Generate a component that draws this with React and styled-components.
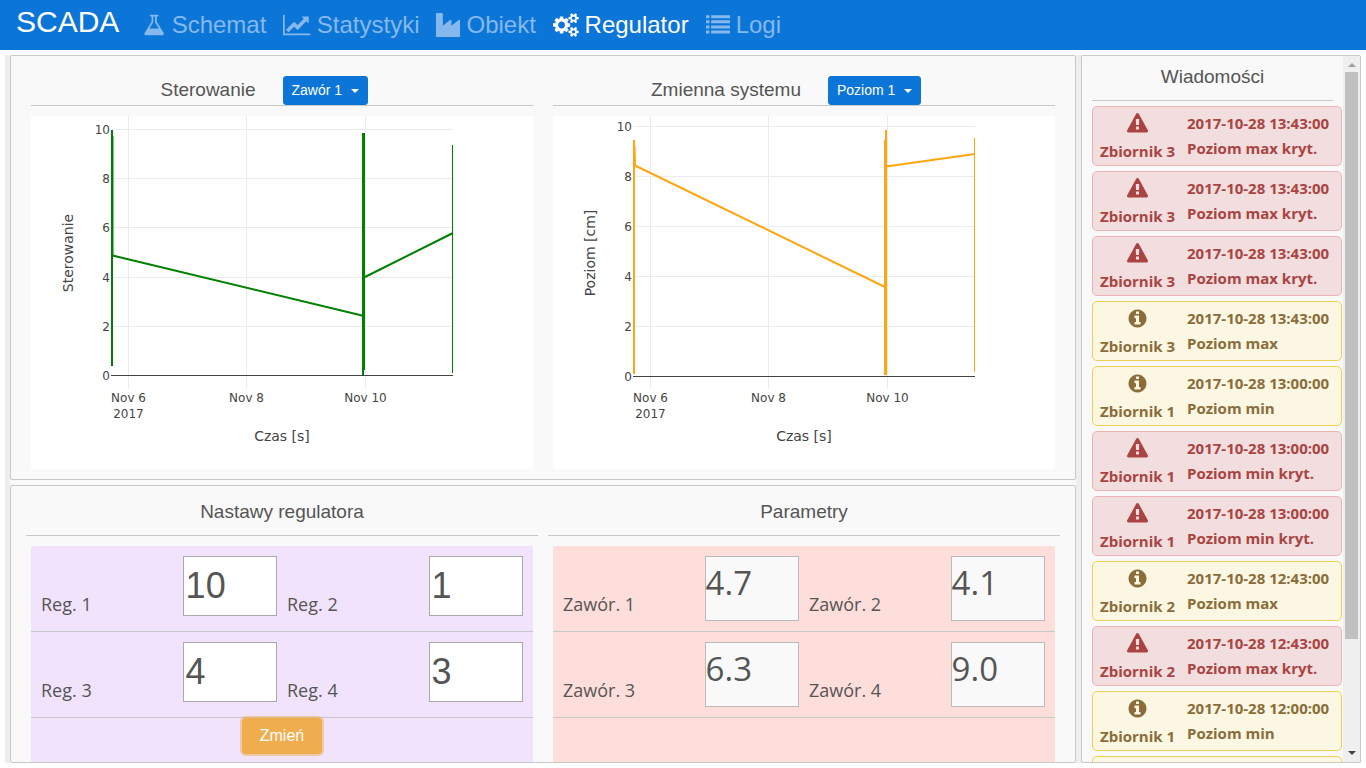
import React, { useState } from 'react';
import styled, { createGlobalStyle, css } from 'styled-components';

const line = '#c8c8c8';
const ink = '#555';
const uiFont = "'Liberation Sans', Arial, sans-serif";
const bodyFont = "'Open Sans', 'Noto Sans', sans-serif";

const GlobalStyle = createGlobalStyle`
  * { box-sizing: border-box; }
  body { margin: 0; background: #fff; color: ${ink}; font-family: ${bodyFont}; }
`;

const Page = styled.div`
  display: flex;
  flex-direction: column;
  height: 100vh;
  overflow: hidden;
`;

/* Navigation */

const Navbar = styled.header`
  display: flex;
  align-items: center;
  gap: 24px;
  flex: none;
  height: 50px;
  padding: 0 16px;
  background: #0c75d8;
  font-family: ${uiFont};
`;

const Brand = styled.a`
  padding-bottom: 6px;
  color: #fff;
  font-size: 30px;
  line-height: 36px;
  text-decoration: none;
`;

const NavList = styled.nav`
  display: flex;
  gap: 17px;
`;

const NavLink = styled.a`
  display: flex;
  align-items: center;
  gap: 6px;
  color: ${(p) => (p.$active ? '#fff' : '#85b9eb')};
  font-size: 24px;
  line-height: 28px;
  text-decoration: none;
`;

const Glyph = styled.svg`
  display: block;
  flex: none;
  height: ${(p) => p.$size}px;
  fill: currentColor;
`;

const icons = {
  flask: [1664, 'M1527 1447q56 89 21.5 153t-140.5 64h-1152q-106 0-140.5-64t21.5-153l503-793v-399h-64q-26 0-45-19t-19-45 19-45 45-19h512q26 0 45 19t19 45-19 45-45 19h-64v399zm-779-725l-272 430h712l-272-430-20-31v-436h-128v436z'],
  chart: [2048, 'M2048 1536v128h-2048v-1536h128v1408h1920zm-128-1248v435q0 21-19.5 29.5t-35.5-7.5l-121-121-633 633q-10 10-23 10t-23-10l-233-233-416 416-192-192 585-585q10-10 23-10t23 10l233 233 464-464-121-121q-16-16-7.5-35.5t29.5-19.5h435q14 0 23 9t9 23z'],
  industry: [1792, 'M448 0q26 0 45 19t19 45v891l536-429q17-14 40-14 26 0 45 19t19 45v379l536-429q17-14 40-14 26 0 45 19t19 45v1152q0 26-19 45t-45 19h-1664q-26 0-45-19t-19-45v-1664q0-26 19-45t45-19h384z'],
  cogs: [1920, 'M896 896q0-106-75-181t-181-75-181 75-75 181 75 181 181 75 181-75 75-181zm768 512q0-52-38-90t-90-38-90 38-38 90q0 53 37.5 90.5t90.5 37.5 90.5-37.5 37.5-90.5zm0-1024q0-52-38-90t-90-38-90 38-38 90q0 53 37.5 90.5t90.5 37.5 90.5-37.5 37.5-90.5zm-384 421v185q0 10-7 19.5t-16 10.5l-155 24q-11 35-32 76 34 48 90 115 7 11 7 20 0 12-7 19-23 30-82.5 89.5t-78.5 59.5q-11 0-21-7l-115-90q-37 19-77 31-11 108-23 155-7 24-30 24h-186q-11 0-20-7.5t-10-17.5l-23-153q-34-10-75-31l-118 89q-7 7-20 7-11 0-21-8-144-133-144-160 0-9 7-19 10-14 41-53t47-61q-23-44-35-82l-152-24q-10-1-17-9.5t-7-19.5v-185q0-10 7-19.5t16-10.5l155-24q11-35 32-76-34-48-90-115-7-11-7-20 0-12 7-20 22-30 82-89t79-59q11 0 21 7l115 90q34-18 77-32 11-108 23-154 7-24 30-24h186q11 0 20 7.5t10 17.5l23 153q34 10 75 31l118-89q8-7 20-7 11 0 21 8 144 133 144 160 0 8-7 19-12 16-42 54t-45 60q23 48 34 82l152 23q10 2 17 10.5t7 19.5zm640 533v140q0 16-149 31-12 27-30 52 51 113 51 138 0 4-4 7-122 71-124 71-8 0-46-47t-52-68q-20 2-30 2t-30-2q-14 21-52 68t-46 47q-2 0-124-71-4-3-4-7 0-25 51-138-18-25-30-52-149-15-149-31v-140q0-16 149-31 13-29 30-52-51-113-51-138 0-4 4-7 4-2 35-20t59-34 30-16q8 0 46 46.5t52 67.5q20-2 30-2t30 2q51-71 92-112l6-2q4 0 124 70 4 3 4 7 0 25-51 138 17 23 30 52 149 15 149 31zm0-1024v140q0 16-149 31-12 27-30 52 51 113 51 138 0 4-4 7-122 71-124 71-8 0-46-47t-52-68q-20 2-30 2t-30-2q-14 21-52 68t-46 47q-2 0-124-71-4-3-4-7 0-25 51-138-18-25-30-52-149-15-149-31v-140q0-16 149-31 13-29 30-52-51-113-51-138 0-4 4-7 4-2 35-20t59-34 30-16q8 0 46 46.5t52 67.5q20-2 30-2t30 2q51-71 92-112l6-2q4 0 124 70 4 3 4 7 0 25-51 138 17 23 30 52 149 15 149 31z'],
  list: [1792, 'M0 1312h256v224h-256zM0 928h256v224h-256zM0 544h256v224h-256zM0 160h256v224h-256zM384 1312h1408v224h-1408zM384 928h1408v224h-1408zM384 544h1408v224h-1408zM384 160h1408v224h-1408z'],
  warning: [1792, 'M1024 1375v-190q0-14-9.5-23.5t-22.5-9.5h-192q-13 0-22.5 9.5t-9.5 23.5v190q0 14 9.5 23.5t22.5 9.5h192q13 0 22.5-9.5t9.5-23.5zm-2-374l18-459q0-12-10-19-13-11-24-11h-220q-11 0-24 11-10 7-10 21l17 457q0 10 10 16.5t24 6.5h185q14 0 23.5-6.5t10.5-16.5zm-14-934l768 1408q35 63-2 126-17 29-46.5 46t-63.5 17h-1536q-34 0-63.5-17t-46.5-46q-37-63-2-126l768-1408q17-31 47-49t65-18 65 18 47 49z'],
  info: [1792, 'M1152 1376v-160q0-14-9-23t-23-9h-96v-512q0-14-9-23t-23-9h-320q-14 0-23 9t-9 23v160q0 14 9 23t23 9h96v320h-96q-14 0-23 9t-9 23v160q0 14 9 23t23 9h448q14 0 23-9t9-23zm-128-896v-160q0-14-9-23t-23-9h-192q-14 0-23 9t-9 23v160q0 14 9 23t23 9h192q14 0 23-9t9-23zm640 416q0 209-103 385.5t-279.5 279.5-385.5 103-385.5-103-279.5-279.5-103-385.5 103-385.5 279.5-279.5 385.5-103 385.5 103 279.5 279.5 103 385.5z'],
};

function Icon({ name, size }) {
  const [width, d] = icons[name];
  return (
    <Glyph viewBox={`0 0 ${width} 1792`} $size={size} aria-hidden="true">
      <path d={d} />
    </Glyph>
  );
}

/* Page frame */

const Workspace = styled.div`
  display: flex;
  gap: 5px;
  flex: 1;
  min-height: 0;
  margin: 5px;
  padding-left: 5px;
  background: #eee;
`;

const MainColumn = styled.main`
  display: flex;
  flex-direction: column;
  gap: 5px;
  flex: 1;
  min-width: 0;
  background: #f9f9f9;
`;

const Panel = styled.section`
  display: flex;
  border: 1px solid ${line};
  border-radius: 2px;
  background: #f9f9f9;
  overflow: hidden;
`;

const ChartsPanel = styled(Panel)`
  flex: none;
  gap: 20px;
  padding: 20px 20px 10px;
`;

const SettingsPanel = styled(Panel)`
  flex: 1;
  min-height: 0;
  gap: 10px;
  padding: 0 15px;
`;

const Title = styled.h2`
  margin: 0;
  font-family: ${uiFont};
  font-size: 19px;
  font-weight: 400;
  line-height: 27px;
  text-align: center;
`;

/* Charts */

const ChartColumn = styled.div`
  flex: 1;
  min-width: 0;
`;

const ChartHeader = styled.div`
  display: flex;
  justify-content: center;
  gap: 27px;
  height: 30px;
  padding-right: 36px;
  margin-bottom: 10px;
  border-bottom: 1px solid ${line};
`;

const Picker = styled.div`
  display: flex;
  position: relative;
`;

const PickerSelect = styled.select`
  appearance: none;
  height: 29px;
  padding: 0 24px 2px 8px;
  border: 1px solid #0c75d8;
  border-radius: 3px;
  background: #0c75d8;
  color: #fff;
  font-family: ${uiFont};
  font-size: 14px;
`;

const Caret = styled.span`
  position: absolute;
  right: 9px;
  top: 13px;
  border: 4px solid transparent;
  border-top-color: #fff;
  border-bottom: 0;
  pointer-events: none;
`;

const Plot = styled.svg`
  display: block;
  width: 100%;
  height: 353px;
  background: #fff;
  fill: #444;
  font-family: 'DejaVu Sans', Verdana, sans-serif;
  font-size: 12px;
`;

const AxisTitle = styled.text`
  font-size: 14px;
  text-anchor: middle;
`;

const dates = [
  [97.5, 'Nov 6'],
  [215.5, 'Nov 8'],
  [334.5, 'Nov 10'],
];

function Chart({ yTitle, rows, color, strokes }) {
  const base = rows[rows.length - 1];
  return (
    <Plot viewBox="0 0 502 353" role="img" aria-label={yTitle}>
      <g stroke="#ebebeb">
        {rows.map((y) => <line key={y} x1="81" x2="422" y1={y} y2={y} />)}
        {dates.map(([x]) => <line key={x} x1={x} x2={x} y1="0" y2="273" />)}
      </g>
      <line x1="80" x2="422" y1={base} y2={base} stroke="#444" />
      <g fill="none" stroke={color}>
        {strokes.map(([width, d]) => <path key={d} d={d} strokeWidth={width} />)}
      </g>
      <g textAnchor="end">
        {rows.map((y, i) => <text key={y} x="79" y={y + 4.5}>{10 - 2 * i}</text>)}
      </g>
      <g textAnchor="middle">
        {dates.map(([x, label]) => <text key={label} x={x} y="286">{label}</text>)}
        <text x="97.5" y="302">2017</text>
      </g>
      <AxisTitle x="251" y="325">Czas [s]</AxisTitle>
      <AxisTitle transform="translate(42 137) rotate(-90)">{yTitle}</AxisTitle>
    </Plot>
  );
}

function ChartBlock({ title, options, ...chart }) {
  return (
    <ChartColumn>
      <ChartHeader>
        <Title>{title}</Title>
        <Picker>
          <PickerSelect aria-label={title}>
            {options.map((o) => <option key={o}>{o}</option>)}
          </PickerSelect>
          <Caret />
        </Picker>
      </ChartHeader>
      <Chart {...chart} />
    </ChartColumn>
  );
}

/* Settings */

const SettingsColumn = styled.div`
  display: flex;
  flex-direction: column;
  flex: 1;
  min-width: 0;
`;

const SettingsTitle = styled(Title)`
  flex: none;
  padding: 12px 0 10px;
  margin-bottom: 10px;
  border-bottom: 1px solid ${line};
`;

const FieldBox = styled.form`
  flex: 1;
  min-height: 0;
  margin: 0 5px;
  border-radius: 2px 2px 0 0;
  background: ${(p) => p.$tint};
  text-align: center;
`;

const FieldRow = styled.div`
  display: flex;
  gap: 10px;
  padding: 10px;
  border-bottom: 1px solid ${line};
  text-align: left;
`;

const Field = styled.div`
  display: flex;
  justify-content: space-between;
  flex: 1;
  min-width: 0;
  height: 65px;
`;

const FieldLabel = styled.label`
  align-self: flex-end;
  padding-bottom: 5px;
  font-size: 18px;
  line-height: 24px;
`;

const cell = css`
  width: 40%;
  color: ${ink};
`;

const NumberInput = styled.input`
  ${cell}
  height: 60px;
  padding: 0 2px;
  border: 1px solid #aaa;
  background: #fff;
  font-family: ${uiFont};
  font-size: 36px;
`;

const Reading = styled.output`
  ${cell}
  border: 1px solid #bbb;
  background: #f9f9f9;
  font-size: 33px;
  line-height: 52px;
`;

const SubmitButton = styled.button`
  width: 80px;
  height: 36px;
  border: 0;
  border-radius: 4px;
  background: #f0ad4e;
  box-shadow: 0 0 0 2px rgba(240, 173, 78, 0.5);
  color: #fff;
  font-family: ${uiFont};
  font-size: 16px;
`;

/* Messages */

const Sidebar = styled(Panel)`
  flex: none;
  width: 280px;
`;

const Feed = styled.div`
  flex: 1;
  min-width: 0;
  padding: 0 1px 0 10px;
`;

const FeedTitle = styled(Title)`
  padding: 7px 0 10px;
  margin: 0 9px 5px 0;
  border-bottom: 1px solid ${line};
`;

const FeedList = styled.ul`
  display: flex;
  flex-direction: column;
  gap: 5px;
  margin: 0;
  padding: 0;
  list-style: none;
`;

const Message = styled.li`
  display: flex;
  gap: 5px;
  height: 60px;
  border: 1px solid ${(p) => (p.$critical ? '#ebb3b6' : '#eed052')};
  border-radius: 5px;
  background: ${(p) => (p.$critical ? '#f2dede' : '#fcf7e2')};
  color: ${(p) => (p.$critical ? '#a94442' : '#8a6d3b')};
  font-size: 15px;
  font-weight: 700;
  line-height: 25px;
  white-space: nowrap;
`;

const Source = styled.div`
  display: flex;
  flex-direction: column;
  align-items: center;
  gap: 5px;
  width: 89px;
  padding-top: 6px;
`;

const Details = styled.div`
  display: flex;
  flex-direction: column;
  padding-top: 4px;
`;

const ScrollTrack = styled.div`
  display: flex;
  flex-direction: column;
  align-items: center;
  justify-content: space-between;
  width: 17px;
  padding: 7px 0;
  background: #efefef;
`;

const ScrollThumb = styled.div`
  flex: 1;
  width: 13px;
  margin: 5px 0 112px;
  background: #c0c0c0;
`;

const ScrollArrow = styled.span`
  border: 4px solid transparent;
  ${(p) => (p.$up
    ? 'border-bottom-color: #a0a0a0; border-top: 0;'
    : 'border-top-color: #444; border-bottom: 0;')}
`;

const navItems = [
  ['flask', 'Schemat'],
  ['chart', 'Statystyki'],
  ['industry', 'Obiekt'],
  ['cogs', 'Regulator'],
  ['list', 'Logi'],
];

const controlStrokes = [
  [2, 'M81 14V250M81.5 20V140'],
  [2, 'M81.5 139.5L332 199.7M334 161L422 117'],
  [3, 'M332.5 17V254'],
  [2, 'M332 250V259M333 120V253'],
  [1, 'M421.5 29V257'],
];

const levelStrokes = [
  [2, 'M81 24V258M81.5 30L82 49'],
  [2, 'M82 49.5L332 171M333 50.5L422 38'],
  [3, 'M332.5 24V259'],
  [2, 'M333 14V30M333 26V258'],
  [1, 'M421.5 22V256'],
];

const messages = [
  ['13:43:00', 3, 'Poziom max kryt.'],
  ['13:43:00', 3, 'Poziom max kryt.'],
  ['13:43:00', 3, 'Poziom max kryt.'],
  ['13:43:00', 3, 'Poziom max'],
  ['13:00:00', 1, 'Poziom min'],
  ['13:00:00', 1, 'Poziom min kryt.'],
  ['13:00:00', 1, 'Poziom min kryt.'],
  ['12:43:00', 2, 'Poziom max'],
  ['12:43:00', 2, 'Poziom max kryt.'],
  ['12:00:00', 1, 'Poziom min'],
];

const readings = ['4.7', '4.1', '6.3', '9.0'];
const pairs = [[0, 1], [2, 3]];

export default function App() {
  const [settings, setSettings] = useState(['10', '1', '4', '3']);
  const change = (index, value) =>
    setSettings(settings.map((old, i) => (i === index ? value : old)));

  return (
    <Page>
      <GlobalStyle />
      <Navbar>
        <Brand href="#scada">SCADA</Brand>
        <NavList>
          {navItems.map(([icon, label]) => (
            <NavLink key={label} href={`#${label}`} $active={label === 'Regulator'}>
              <Icon name={icon} size={24} />
              {label}
            </NavLink>
          ))}
        </NavList>
      </Navbar>
      <Workspace>
        <MainColumn>
          <ChartsPanel>
            <ChartBlock
              title="Sterowanie"
              options={['Zawór 1', 'Zawór 2', 'Zawór 3', 'Zawór 4']}
              yTitle="Sterowanie"
              rows={[13.5, 62.5, 111.5, 161.5, 210.5, 259.5]}
              color="#008000"
              strokes={controlStrokes}
            />
            <ChartBlock
              title="Zmienna systemu"
              options={['Poziom 1', 'Poziom 2', 'Poziom 3']}
              yTitle="Poziom [cm]"
              rows={[10.5, 60.5, 110.5, 160.5, 210.5, 260.5]}
              color="#ffa510"
              strokes={levelStrokes}
            />
          </ChartsPanel>
          <SettingsPanel>
            <SettingsColumn>
              <SettingsTitle>Nastawy regulatora</SettingsTitle>
              <FieldBox $tint="#f2e3fc" onSubmit={(e) => e.preventDefault()}>
                {pairs.map((pair) => (
                  <FieldRow key={pair[0]}>
                    {pair.map((i) => (
                      <Field key={i}>
                        <FieldLabel htmlFor={`reg-${i}`}>Reg. {i + 1}</FieldLabel>
                        <NumberInput
                          id={`reg-${i}`}
                          value={settings[i]}
                          onChange={(e) => change(i, e.target.value)}
                        />
                      </Field>
                    ))}
                  </FieldRow>
                ))}
                <SubmitButton type="submit">Zmień</SubmitButton>
              </FieldBox>
            </SettingsColumn>
            <SettingsColumn>
              <SettingsTitle>Parametry</SettingsTitle>
              <FieldBox as="div" $tint="#fddedb">
                {pairs.map((pair) => (
                  <FieldRow key={pair[0]}>
                    {pair.map((i) => (
                      <Field key={i}>
                        <FieldLabel htmlFor={`valve-${i}`}>Zawór. {i + 1}</FieldLabel>
                        <Reading id={`valve-${i}`}>{readings[i]}</Reading>
                      </Field>
                    ))}
                  </FieldRow>
                ))}
              </FieldBox>
            </SettingsColumn>
          </SettingsPanel>
        </MainColumn>
        <Sidebar as="aside">
          <Feed>
            <FeedTitle>Wiadomości</FeedTitle>
            <FeedList>
              {messages.map(([time, tank, text], i) => {
                const critical = text.endsWith('kryt.');
                return (
                  <Message key={i} $critical={critical}>
                    <Source>
                      <Icon name={critical ? 'warning' : 'info'} size={21} />
                      <span>Zbiornik {tank}</span>
                    </Source>
                    <Details>
                      <time>2017-10-28 {time}</time>
                      <span>{text}</span>
                    </Details>
                  </Message>
                );
              })}
              <Message aria-hidden="true" />
            </FeedList>
          </Feed>
          <ScrollTrack aria-hidden="true">
            <ScrollArrow $up />
            <ScrollThumb />
            <ScrollArrow />
          </ScrollTrack>
        </Sidebar>
      </Workspace>
    </Page>
  );
}
